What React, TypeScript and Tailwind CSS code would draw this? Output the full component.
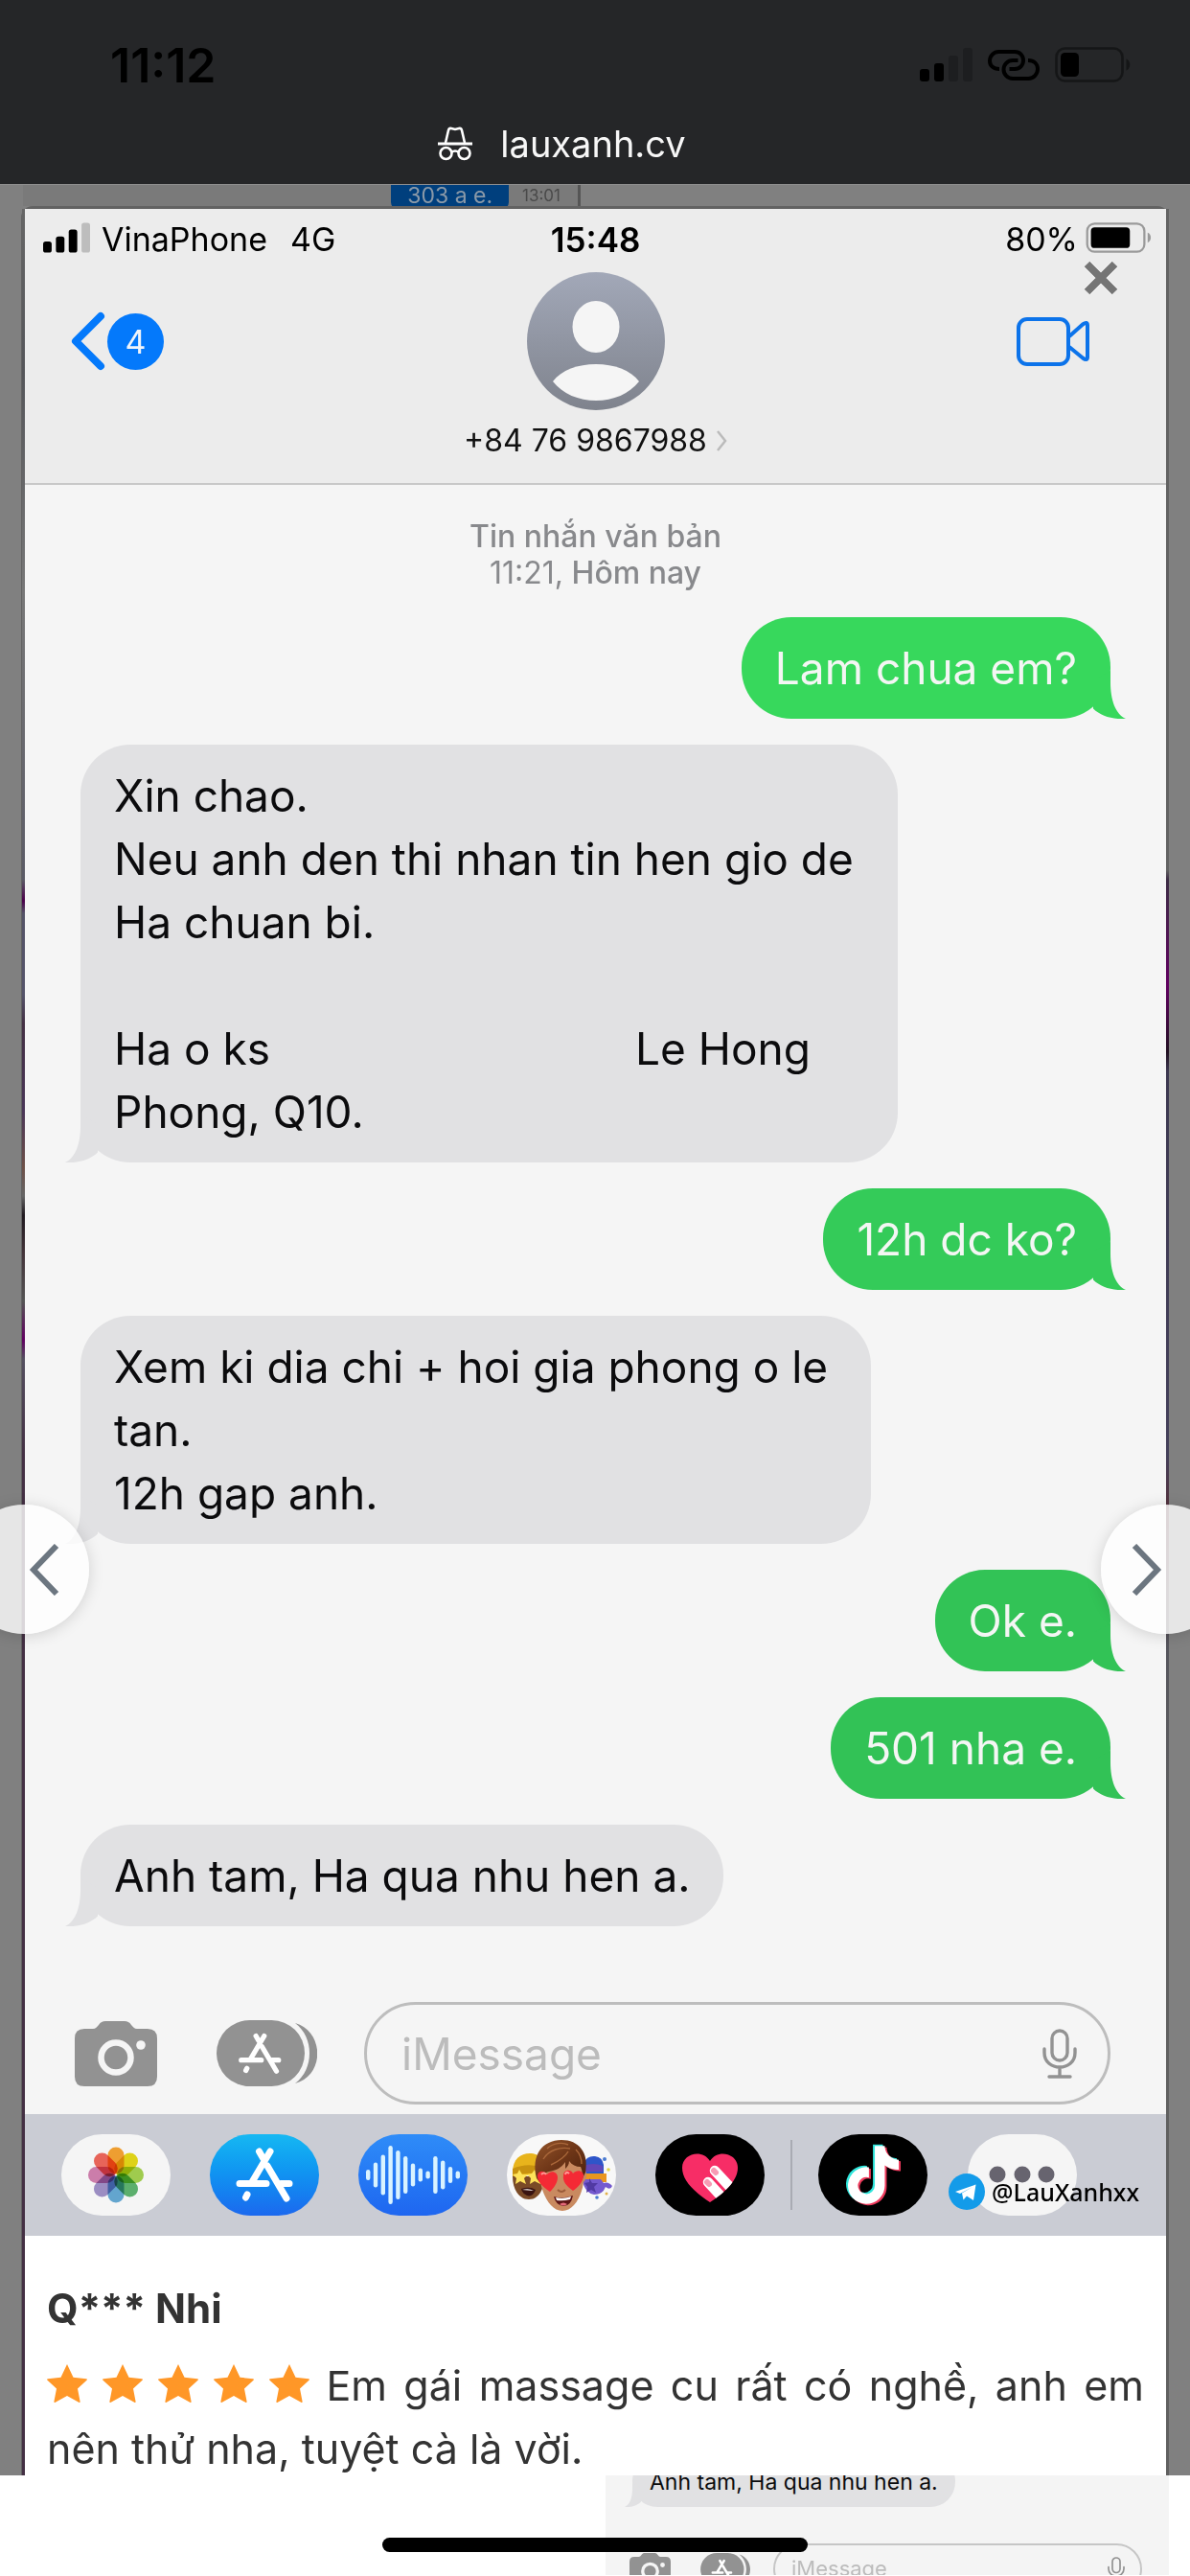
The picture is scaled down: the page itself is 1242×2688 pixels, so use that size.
import React from "react";
import { FaTiktok } from "react-icons/fa6";

type Side = "in" | "out";

function SignalBars({ on, off, className }: { on: number; off: string; className: string }) {
  const tops = [22, 16, 8, 0];
  return (
    <svg viewBox="0 0 55 35" className={className} aria-hidden="true">
      {tops.map((top, i) => (
        <rect key={top} x={i * 15} y={top} width="10" height={35 - top} rx="3" fill={i < on ? "#000" : off} />
      ))}
    </svg>
  );
}

function Battery({ level, stroke, className }: { level: number; stroke: string; className: string }) {
  return (
    <svg viewBox="0 0 80 37" className={className} aria-hidden="true">
      <rect x="1.5" y="1.5" width="69" height="34" rx="9" fill="none" stroke={stroke} strokeWidth="2.6" />
      <rect x="6" y="6" width={level} height="25" rx="4.5" fill="#000" />
      <path d="M74.5 12.5c5 2 5 10 0 12z" fill={stroke} />
    </svg>
  );
}

function LinkIcon() {
  return (
    <svg viewBox="0 0 54 32" className="h-8 w-[54px]" fill="none" stroke="#000" strokeWidth="4" aria-hidden="true">
      <path d="M12 20C5.500 20 2 16.500 2 11.500S6 2 11.500 2H28c5.500 0 9 4 9 9s-3.500 9-9 9h-5.500" />
      <path d="M42 11c6.500 0 10 4 10 9s-4 10-9.500 10H26c-5.500 0-9.500-4.500-9.500-9.500S20.500 11 26 11h5.500" />
    </svg>
  );
}

function Incognito() {
  return (
    <svg viewBox="0 0 38 36" className="h-9 w-[38px]" fill="none" stroke="#fff" strokeWidth="2.600" aria-hidden="true">
      <path d="M9 17 12 4q.7-2.500 3-2l4 1 4-1q2.300-.5 3 2l3 13" />
      <path d="M1 18h36" strokeWidth="3" />
      <circle cx="9.500" cy="28" r="6" />
      <circle cx="28.500" cy="28" r="6" />
      <path d="M15 27q4-3 8 0" />
    </svg>
  );
}

function AppGlyph() {
  return (
    <g stroke="#fff" strokeWidth="7" strokeLinecap="round" fill="none">
      <path d="M63 18 44 50M51.500 18l4 7M60 33l20 34M31 51.500h28M74 51.500h9M39 63l-1.500 3" />
    </g>
  );
}

function CameraIcon({ className }: { className: string }) {
  return (
    <svg viewBox="0 0 86 68" className={className} aria-hidden="true">
      <path
        d="M10 8h9c3 0 4-2 6-4 2-3 4-4 7-4h20c3 0 5 1 7 4 2 2 3 4 6 4h11q10 0 10 10v40q0 10-10 10H10Q0 68 0 58V18Q0 8 10 8z"
        fill="#929292"
      />
      <circle cx="43" cy="38" r="15.500" fill="none" stroke="#f5f5f5" strokeWidth="6.500" />
      <circle cx="69" cy="25" r="4.800" fill="#f5f5f5" />
    </svg>
  );
}

function AppsIcon({ className }: { className: string }) {
  return (
    <svg viewBox="0 0 105 69" className={className} aria-hidden="true">
      <rect width="92" height="69" rx="34.500" fill="#929292" />
      <path d="M82 3c31 9 31 55 0 63 20-15 20-48 0-63z" fill="#929292" />
      <g transform="translate(2.500 3) scale(.75)">
        <AppGlyph />
      </g>
    </svg>
  );
}

function MicIcon({ className }: { className: string }) {
  return (
    <svg viewBox="0 0 36 52" className={className} fill="none" stroke="#929292" strokeWidth="3.400" strokeLinecap="round" aria-hidden="true">
      <rect x="10" y="2" width="16" height="31" rx="8" />
      <path d="M2 21v4c0 20 32 20 32 0v-4M18 41v8M7 50h22" />
    </svg>
  );
}

function Chevron({ className, d }: { className: string; d: string }) {
  return (
    <svg viewBox="0 0 32 54" className={className} fill="none" stroke="currentColor" strokeWidth="6" aria-hidden="true">
      <path d={d} />
    </svg>
  );
}

function Bubble({ side, color, children }: { side: Side; color: string; children: React.ReactNode }) {
  const out = side === "out";
  return (
    <div
      className={
        "relative max-w-[853px] rounded-[52px] px-[35px] py-5 text-[46px] leading-[66px] " +
        (out ? "self-end text-[#f4f6f4]" : "self-start text-[#0b0b0d]")
      }
      style={{ backgroundColor: color }}
    >
      <svg
        viewBox="-20 -52 36 52"
        className={"absolute bottom-0 h-[52px] w-9 " + (out ? "-right-4" : "-left-4 -scale-x-100")}
        aria-hidden="true"
      >
        <path d="M-18-10.500V-40L0-50V-38C0-20 5-5 16 0 2 1-10-3-18-10.500z" fill={color} />
      </svg>
      {children}
    </div>
  );
}

const petals = ["#f79b1d", "#e4d700", "#9ccf3e", "#4fae62", "#56a3d3", "#9787c4", "#cf74a8", "#f0584a"];
const wave = [11, 26, 42, 61, 51, 39, 24, 14, 8, 39, 30, 17, 8];

function Pill({ label, className, children }: { label: string; className: string; children: React.ReactNode }) {
  return (
    <button aria-label={label} className={"h-[85px] w-[114px] shrink-0 overflow-hidden rounded-full " + className}>
      {children}
    </button>
  );
}

function Memoji() {
  return (
    <svg viewBox="0 0 114 85" className="size-full" aria-hidden="true">
      <defs>
        <linearGradient id="hair" x1="0" y1="0" x2="1" y2="1">
          <stop offset="0" stopColor="#94552a" />
          <stop offset=".5" stopColor="#6d3517" />
          <stop offset="1" stopColor="#4a210d" />
        </linearGradient>
      </defs>
      <path d="M6 44c0 14 7 24 17 24s16-10 16-24z" fill="#7a4a26" />
      <path d="M6 40C6 26 14 20 24 20s16 6 16 22l-34 2z" fill="#e8b41c" />
      <path d="M6 36q16-7 32-1v8q-16-5-32 1z" fill="#c8920f" />
      <path d="m13 37 3 5 6 0-4 4 2 6-6-3-5 3 1-6-4-4 5-1zM29 37l3 5 5 0-3 4 1 6-6-3-5 3 1-6-4-4 5-1z" fill="#ffe35a" />
      <path d="M15 57q9-3 15 1-3 8-9 6-5-2-6-7z" fill="#3a1410" />
      <path d="M16 58q7-2 12 1z" fill="#fff" />
      <path d="M80 43V30q4-8 12-7 8 1 9 9v12z" fill="#2e55c9" />
      <path d="M80 33q10-4 20 0v6H80z" fill="#6247b8" />
      <path d="M80 41h24v9H80z" fill="#e99620" />
      <path d="M79 50q4 12 12 13 9 0 12-8 5 4 7-1-4-5-9-3l-3-4H80z" fill="#7459cf" />
      <path d="m86 46 3 5 6 0-4 4 2 6-5-3-5 3 1-6-3-4 5-1z" fill="#5139a3" />
      <g fill="#4a7bd0">
        <circle cx="102" cy="26" r="2" />
        <circle cx="94" cy="66" r="1.800" />
      </g>
      <circle cx="106" cy="37" r="1.800" fill="#e2d64a" />
      <circle cx="104" cy="62" r="1.500" fill="#e2b14a" />
      <path d="M33 38c0-16 9-25 25-25s24 9 23 25c3 0 3 9-1 12-2 16-11 30-22 30S38 66 35 50c-4-3-5-11-2-12z" fill="#c98a60" />
      <path
        d="M31 46C25 22 37 6 57 6c18 0 29 13 25 34l-4 8c1-6 1-10-1-14-5 0-9-2-12-6 0 4-2 6-4 8l0-7c-4 6-10 9-17 10-5 1-7 4-7 9l-3 2z"
        fill="url(#hair)"
      />
      <path d="M42 15c6-6 16-7 22-4M38 26c6-10 18-13 28-11M46 32c9-4 16-10 18-14M72 16c4 4 6 10 6 15" stroke="#a9673a" strokeWidth="1.400" fill="none" />
      <path d="M45 60c-8-5-13-11-13-16 0-6 7-7 10-2 4-5 11-3 11 3 0 5-3 10-8 15zM69 59c-7-5-11-10-10-16 0-6 8-7 10-2 4-5 12-3 11 3-1 6-5 11-11 15z" fill="#f42a35" />
      <path d="M36 42q3-3 5 0M65 41q-3-3-4 1" stroke="#ff9a95" strokeWidth="2" fill="none" />
      <path d="M53 58q4 4 8 0" stroke="#9b5c3a" strokeWidth="2" fill="none" />
      <path d="M49 65q9 3 20-1-2 11-10 11-8-1-10-10z" fill="#5c1515" />
      <path d="M51 66q8 2 16-1l-1 3q-7 2-14 1z" fill="#fff" />
      <path d="M55 73q4-3 8 0-4 3-8 0z" fill="#e5697a" />
    </svg>
  );
}

function AppStrip() {
  return (
    <nav aria-label="Apps" className="relative flex h-[127px] items-center bg-[#caccd4] px-[38px]">
      <div className="flex gap-[41px]">
        <Pill label="Photos" className="bg-[#f5f5f5]">
          <svg viewBox="0 0 114 85" className="size-full" aria-hidden="true">
            {petals.map((c, i) => (
              <rect
                key={c}
                x="48.500"
                y="13.500"
                width="17"
                height="28"
                rx="8.500"
                fill={c}
                fillOpacity=".9"
                className="mix-blend-multiply"
                transform={`rotate(${i * 45} 57 42.5)`}
              />
            ))}
          </svg>
        </Pill>
        <Pill label="App Store" className="bg-gradient-to-b from-[#17b8f2] to-[#1c68ee]">
          <svg viewBox="0 0 114 85" className="size-full" aria-hidden="true">
            <AppGlyph />
          </svg>
        </Pill>
        <Pill label="Audio" className="bg-gradient-to-b from-[#2f8cf8] to-[#1f66f0]">
          <svg viewBox="0 0 114 85" className="size-full" aria-hidden="true">
            {wave.map((h, i) => (
              <rect key={i} x={8 + i * 7.8} y={42.5 - h / 2} width="4.400" height={h} rx="2.200" fill="#d9f3ff" />
            ))}
          </svg>
        </Pill>
        <Pill label="Memoji" className="bg-[#f8f8f8]">
          <Memoji />
        </Pill>
        <Pill label="Digital Touch" className="bg-black">
          <svg viewBox="0 0 114 85" className="size-full" aria-hidden="true">
            <defs>
              <clipPath id="heart">
                <path d="M57 71C42 61 28 49 28 35c0-15 21-20 29-7 8-13 29-8 29 7 0 14-14 26-29 36z" />
              </clipPath>
            </defs>
            <g clipPath="url(#heart)">
              <rect width="114" height="85" fill="#f72d66" />
              <path d="m62 38 26 28M55 50l22 24" stroke="#fff" strokeWidth="10.500" strokeLinecap="round" />
              <path d="m61 38 2 2M54 50l2 2" stroke="#f79bb4" strokeWidth="6" strokeLinecap="round" />
            </g>
          </svg>
        </Pill>
      </div>
      <div className="mx-[27px] h-[73px] w-[2px] bg-[#a9abb3]" />
      <Pill label="TikTok" className="relative bg-black">
        <FaTiktok className="absolute top-[10px] left-[29px] h-[62px] w-[53px] text-[#2fe6dc]" />
        <FaTiktok className="absolute top-[13px] left-[33px] h-[62px] w-[53px] text-[#ee3a5c]" />
        <FaTiktok className="absolute top-3 left-[31px] h-[61px] w-[53px] text-white" />
      </Pill>
      <Pill label="More" className="ml-[42px] bg-[#f5f5f5]">
        <svg viewBox="0 0 114 85" className="size-full" fill="#67646f" aria-hidden="true">
          <circle cx="31" cy="42" r="8.500" />
          <circle cx="57" cy="42" r="8.500" />
          <circle cx="82" cy="42" r="8.500" />
        </svg>
      </Pill>
      <div className="absolute top-[62px] right-7 flex items-center gap-[7px]">
        <svg viewBox="0 0 38 38" className="size-[38px]" aria-hidden="true">
          <circle cx="19" cy="19" r="19" fill="#139be9" />
          <path d="M7 19 28.500 11.500 26 28l-7-4.500-3.500 4-1.500-7L25 14 12 21z" fill="#fff" />
        </svg>
        <span className="font-['Noto_Sans',sans-serif] text-[25px] leading-[38px] font-medium text-black">@LauXanhxx</span>
      </div>
    </nav>
  );
}

function ChatHeader() {
  return (
    <header className="border-b-2 border-[#c8c8c8] bg-[#ececec] pt-3 pb-6">
      <div className="grid h-8 grid-cols-3 items-center text-[34px] leading-8 text-black">
        <div className="flex items-center pl-[19px]">
          <SignalBars on={3} off="#bdbdbd" className="h-8 w-[49px]" />
          <span className="ml-3 pt-1">VinaPhone</span>
          <span className="ml-6 pt-1">4G</span>
        </div>
        <span className="pt-1 text-center text-[35px] font-semibold">15:48</span>
        <div className="flex items-center justify-end gap-2 pr-[14px]">
          <span className="pt-1">80%</span>
          <Battery level={47} stroke="#9a9a9a" className="h-8 w-[70px]" />
        </div>
      </div>
      <div className="mt-[22px] grid grid-cols-3">
        <button aria-label="Back, 4 unread" className="flex h-[144px] items-center pl-12">
          <svg viewBox="0 0 36 62" className="h-[62px] w-9" fill="none" stroke="#0479fb" strokeWidth="8" strokeLinecap="round" strokeLinejoin="round" aria-hidden="true">
            <path d="M31 5 5 31l26 26" />
          </svg>
          <span className="ml-[2px] flex size-[59px] items-center justify-center rounded-full bg-[#0479fb] text-[34px] text-[#f0f4fa]">4</span>
        </button>
        <div className="flex flex-col items-center">
          <svg viewBox="0 0 144 144" className="size-[144px]" aria-hidden="true">
            <defs>
              <linearGradient id="avatar" x1="0" y1="0" x2="0" y2="1">
                <stop offset="0" stopColor="#a2a8b8" />
                <stop offset="1" stopColor="#7f838d" />
              </linearGradient>
            </defs>
            <circle cx="72" cy="72" r="72" fill="url(#avatar)" />
            <ellipse cx="72" cy="57" rx="24.500" ry="27" fill="#f5f5f5" />
            <path d="M27 114c9-12 26-18 45-18s36 6 45 18c-10 13-27 20-45 20s-35-7-45-20z" fill="#f5f5f5" />
          </svg>
          <button className="mt-3 flex items-center gap-[10px] text-[32px] leading-10 text-[#111]">
            <span className="whitespace-nowrap">+84 76 9867988</span>
            <svg viewBox="0 0 11 22" className="h-[22px] w-[11px]" fill="none" stroke="#bbb" strokeWidth="2.500" aria-hidden="true">
              <path d="m1 1 8 10-8 10" />
            </svg>
          </button>
        </div>
        <button aria-label="Video call" className="flex h-[144px] items-center justify-end pr-20">
          <svg viewBox="0 0 76 51" className="h-[51px] w-[76px]" fill="none" stroke="#0c73ea" strokeWidth="4" strokeLinejoin="round" aria-hidden="true">
            <rect x="2" y="2" width="52" height="47" rx="9" />
            <path d="M55 20 69 7.500q5-3.500 5 1v33q0 4.500-5 1L55 31" />
          </svg>
        </button>
      </div>
    </header>
  );
}

function Stars() {
  return (
    <span className="inline-flex gap-4 align-[-2px]" role="img" aria-label="5 / 5">
      {[0, 1, 2, 3, 4].map((i) => (
        <svg key={i} viewBox="0 0 42 40" className="h-10 w-[42px]" aria-hidden="true">
          <path
            d="M21 0 27.500 13.800 41 15.200q1.500.3.500 1.600L32 25.500 34.600 39q0 1.500-1.400.8L21 33 8.800 39.800q-1.400.7-1.400-.8L10 25.500.5 16.800Q-.5 15.500 1 15.200l13.500-1.400z"
            fill="#ff9727"
          />
        </svg>
      ))}
    </span>
  );
}

export default function App() {
  return (
    <div className="flex min-h-screen w-full flex-col overflow-hidden bg-white font-['Inter','Noto_Sans',sans-serif]">
      <header className="h-48 bg-[#252628]">
        <div className="flex h-[118px] items-end justify-between pr-[61px] pb-8 pl-[115px]">
          <span className="text-[50px] leading-9 font-semibold text-black">11:12</span>
          <div className="flex items-center gap-4">
            <SignalBars on={2} off="#1d1e20" className="h-[35px] w-[55px]" />
            <LinkIcon />
            <Battery level={19} stroke="#151617" className="h-[37px] w-[80px]" />
          </div>
        </div>
        <div className="flex h-16 items-center justify-center gap-7 pr-[70px]">
          <Incognito />
          <span className="text-[38px] leading-[60px] text-[#f7f7f7]">lauxanh.cv</span>
        </div>
      </header>

      <main className="relative flex flex-col bg-[#808080]">
        <div className="flex h-[23px] border-t border-[#8e8e8e] pl-6">
          <div className="flex w-[582px] items-start justify-end border-r-[3px] border-[#555] bg-[#7a7a7a] pr-[18px]">
            <span className="h-[26px] rounded-b-lg bg-[#003f7d] px-[17px] text-[23px] leading-[22px] text-[#8a99a8]">303 a e.</span>
            <span className="ml-[14px] text-[17px] leading-[22px] text-[#4a4a4a]">13:01</span>
          </div>
        </div>

        <div className="relative mx-[22px] flex rounded-t-xl bg-[#626262] pt-[3px]">
          <div className="ml-px w-[3px] bg-[linear-gradient(180deg,#666_0,#55565a_170px,#777_400px,#5b5b66_700px,#4b004b_722px,#555468_735px,#55546a_820px,#443044_850px,#4a3658_940px,#6d5048_1000px,#666_1030px,#201a20_1050px,#44343a_1090px,#555_1140px,#600060_1180px,#555060_1200px,#443044_1300px,#443044_2300px)]" />
          <div className="min-w-0 flex-1">
            <ChatHeader />

            <section className="bg-[#f5f5f5] pt-[35px]">
              <p className="text-center text-[32px] leading-[38px] font-medium text-[#88898c]">
                Tin nhắn văn bản
                <br />
                <span className="font-normal">11:21,</span> Hôm nay
              </p>

              <div className="mt-[27px] flex flex-col gap-[27px] pr-[58px] pl-[58px]">
                <Bubble side="out" color="#37d85c">Lam chua em?</Bubble>
                <Bubble side="in" color="#e1e1e3">
                  Xin chao.
                  <br />
                  Neu anh den thi nhan tin hen gio de Ha chuan bi.
                  <br />
                  <br />
                  Ha o ks<span className="inline-block w-[368px]"> </span> Le Hong
                  <br />
                  Phong, Q10.
                </Bubble>
                <Bubble side="out" color="#34cb59">12h dc ko?</Bubble>
                <Bubble side="in" color="#e1e1e3">
                  <span className="block pr-[10px]">
                    Xem ki dia chi + hoi gia phong o le
                    <br />
                    tan.
                    <br />
                    12h gap anh.
                  </span>
                </Bubble>
                <Bubble side="out" color="#32c356">Ok e.</Bubble>
                <Bubble side="out" color="#32c256">501 nha e.</Bubble>
                <Bubble side="in" color="#e1e1e3">Anh tam, Ha qua nhu hen a.</Bubble>
              </div>

              <div className="mt-[79px] flex items-center pr-[58px] pb-[10px] pl-[52px]">
                <button aria-label="Camera">
                  <CameraIcon className="h-[68px] w-[86px]" />
                </button>
                <button aria-label="Apps" className="ml-[62px]">
                  <AppsIcon className="h-[69px] w-[105px]" />
                </button>
                <div className="ml-[49px] flex h-[107px] min-w-0 flex-1 items-center rounded-[54px] border-[3px] border-[#bdbdbd] pr-8 pl-9">
                  <input
                    aria-label="iMessage"
                    placeholder="iMessage"
                    className="min-w-0 flex-1 bg-transparent text-[46px] leading-[60px] outline-none placeholder:text-[#bcbcbc]"
                  />
                  <button aria-label="Dictate">
                    <MicIcon className="h-[52px] w-9" />
                  </button>
                </div>
              </div>
            </section>

            <AppStrip />

            <article className="h-[250px] bg-white px-[23px] pt-[43px] text-[#333]">
              <h2 className="text-[42px] leading-[66px] font-bold">Q*** Nhi</h2>
              <p className="mt-[14px] text-justify text-[43px] leading-[66px]">
                <Stars /> Em gái massage cu rất có nghề, anh em nên thử nha, tuyệt cà là vời.
              </p>
            </article>
          </div>
          <div className="w-[3px] bg-[linear-gradient(180deg,#626262_690px,#3c2c44_700px,#600060_810px,#221122_880px,#3c3850_900px,#44405a_1300px,#55303a_1360px,#55555c_1500px,#606060_1700px)]" />
        </div>

        <button
          aria-label="Close"
          className="absolute top-20 right-[75px] size-9 text-[#757575]"
        >
          <svg viewBox="0 0 36 36" className="size-9" fill="none" aria-hidden="true">
            <path d="m3.500 3.500 29 29M32.500 3.500l-29 29" stroke="#fff" strokeWidth="9.500" />
            <path d="m3.500 3.500 29 29M32.500 3.500l-29 29" stroke="currentColor" strokeWidth="8" />
          </svg>
        </button>
        <button
          aria-label="Previous"
          className="absolute top-[1378px] -left-[42px] flex size-[135px] items-center justify-center rounded-full bg-white/80 pl-10 text-[#6c7680] shadow-[0_2px_16px_rgba(0,0,0,0.15)]"
        >
          <Chevron className="h-[54px] w-8" d="M29 2 5 27l24 25" />
        </button>
        <button
          aria-label="Next"
          className="absolute top-[1378px] -right-[42px] flex size-[135px] items-center justify-center rounded-full bg-white/80 pr-10 text-[#6c7680] shadow-[0_2px_16px_rgba(0,0,0,0.15)]"
        >
          <Chevron className="h-[54px] w-8" d="m3 2 24 25L3 52" />
        </button>
      </main>

      <footer className="relative flex h-[104px] justify-end overflow-hidden bg-white pr-[22px]">
        <div className="flex w-[588px] flex-col items-start bg-[#f4f4f4]">
          <div className="relative -mt-5 ml-7 h-[53px] shrink-0 rounded-[26px] bg-[#e1e1e3] px-[18px] text-[23px] leading-[54px] text-[#0b0b0d]">
            <svg viewBox="-20 -52 36 52" className="absolute bottom-0 -left-2 h-[26px] w-[18px] -scale-x-100" aria-hidden="true">
              <path d="M-18-10.500V-40L0-50V-38C0-20 5-5 16 0 2 1-10-3-18-10.500z" fill="#e1e1e3" />
            </svg>
            Anh tam, Ha qua nhu hen a.
          </div>
          <div className="mt-[38px] flex w-full shrink-0 items-center pr-7 pl-[25px]">
            <CameraIcon className="h-[34px] w-[43px]" />
            <AppsIcon className="ml-[31px] h-[34px] w-[52px]" />
            <div className="ml-6 flex h-[53px] flex-1 items-center justify-between rounded-full border-2 border-[#c6c6c6] pr-4 pl-[17px] text-[22px] text-[#bcbcbc]">
              iMessage
              <MicIcon className="h-[26px] w-[18px]" />
            </div>
          </div>
        </div>
        <div className="absolute bottom-6 left-1/2 h-[15px] w-[444px] -translate-x-1/2 rounded-full bg-black" />
      </footer>
    </div>
  );
}
